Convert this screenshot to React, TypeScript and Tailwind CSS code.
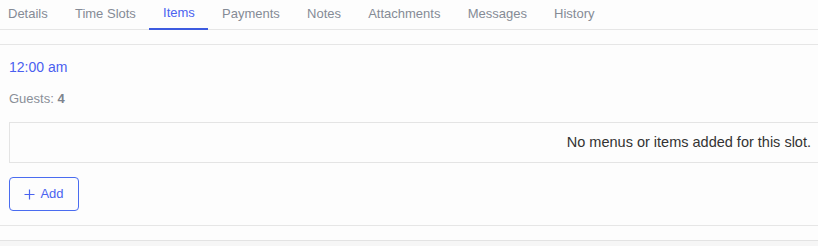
const TABS = ["Details", "Time Slots", "Items", "Payments", "Notes", "Attachments", "Messages", "History"];

export default function App() {
  const active = "Items";

  return (
    <div className="w-[818px] h-[246px] overflow-hidden bg-[#fdfdfd] font-['Liberation_Sans',Arial,sans-serif] text-[13px]">
      {/* Tabs */}
      <div className="flex h-[30px] border-b border-[#e6e6e6]">
        {TABS.map((t) => (
          <div
            key={t}
            className={`flex items-center h-[30px] px-[13.6px] first:pl-[8px] -mb-px pb-[3px] ${
              t === active
                ? "text-[#4a63f0] border-b-2 border-[#3d5be0]"
                : "text-[#858b96]"
            }`}
          >
            {t}
          </div>
        ))}
      </div>

      <div className="h-[14px]" />

      {/* Slot panel */}
      <div className="border-y border-[#e6e6e6] pl-[9px] pt-[13px] pb-[14px] bg-[#fdfdfd]">
        <div className="text-[#4a5ff0] text-[14px] leading-[18px]">12:00 am</div>
        <div className="mt-[14px] text-[#8a8f98] text-[13px] leading-[17px]">
          Guests: <span className="font-bold text-[#7d838d]">4</span>
        </div>
        <div className="mt-[15px] h-[41px] border-y border-l border-[#e4e4e4] flex items-center justify-end pr-[7px] text-[#333] text-[14.5px]">
          No menus or items added for this slot.
        </div>
        <button className="mt-[14px] w-[70px] h-[34px] rounded-[4px] border border-[#4a6cf0] text-[#4a63f0] flex items-center justify-center gap-[5px] text-[13px]">
          <svg width="11" height="11" viewBox="0 0 11 11" fill="none" stroke="#4a63f0" strokeWidth="1.2">
            <path d="M5.5 0.5v10M0.5 5.5h10" />
          </svg>
          Add
        </button>
      </div>

      <div className="h-[14px]" />
      <div className="border-t border-[#e3e3e3] bg-[#f6f6f6] h-[20px]" />
    </div>
  );
}
